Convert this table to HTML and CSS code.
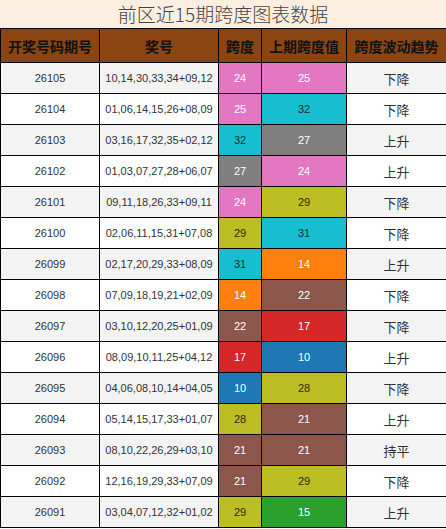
FILE: index.html
```html
<!DOCTYPE html>
<html lang="zh-CN">
<head>
    <meta charset="UTF-8">
    <title>前区近15期跨度图表数据</title>
    <link rel="stylesheet" href="styles.css">
</head>
<body>
    <div class="chart">
        <div class="title">前区近15期跨度图表数据</div>
        <table class="span-table">
            <colgroup>
                <col class="c-issue">
                <col class="c-nums">
                <col class="c-span">
                <col class="c-prev">
                <col class="c-trend">
            </colgroup>
            <thead>
                <tr>
                    <th>开奖号码期号</th>
                    <th>奖号</th>
                    <th>跨度</th>
                    <th>上期跨度值</th>
                    <th>跨度波动趋势</th>
                </tr>
            </thead>
            <tbody>
                <tr><td>26105</td><td>10,14,30,33,34+09,12</td><td class="pink">24</td><td class="pink">25</td><td>下降</td></tr>
                <tr><td>26104</td><td>01,06,14,15,26+08,09</td><td class="pink">25</td><td class="cyan">32</td><td>下降</td></tr>
                <tr><td>26103</td><td>03,16,17,32,35+02,12</td><td class="cyan">32</td><td class="grey">27</td><td>上升</td></tr>
                <tr><td>26102</td><td>01,03,07,27,28+06,07</td><td class="grey">27</td><td class="pink">24</td><td>上升</td></tr>
                <tr><td>26101</td><td>09,11,18,26,33+09,11</td><td class="pink">24</td><td class="olive">29</td><td>下降</td></tr>
                <tr><td>26100</td><td>02,06,11,15,31+07,08</td><td class="olive">29</td><td class="cyan">31</td><td>下降</td></tr>
                <tr><td>26099</td><td>02,17,20,29,33+08,09</td><td class="cyan">31</td><td class="orange">14</td><td>上升</td></tr>
                <tr><td>26098</td><td>07,09,18,19,21+02,09</td><td class="orange">14</td><td class="brown">22</td><td>下降</td></tr>
                <tr><td>26097</td><td>03,10,12,20,25+01,09</td><td class="brown">22</td><td class="red">17</td><td>下降</td></tr>
                <tr><td>26096</td><td>08,09,10,11,25+04,12</td><td class="red">17</td><td class="blue">10</td><td>上升</td></tr>
                <tr><td>26095</td><td>04,06,08,10,14+04,05</td><td class="blue">10</td><td class="olive">28</td><td>下降</td></tr>
                <tr><td>26094</td><td>05,14,15,17,33+01,07</td><td class="olive">28</td><td class="brown">21</td><td>上升</td></tr>
                <tr><td>26093</td><td>08,10,22,26,29+03,10</td><td class="brown">21</td><td class="brown">21</td><td>持平</td></tr>
                <tr><td>26092</td><td>12,16,19,29,33+07,09</td><td class="brown">21</td><td class="olive">29</td><td>下降</td></tr>
                <tr><td>26091</td><td>03,04,07,12,32+01,02</td><td class="olive">29</td><td class="green">15</td><td>上升</td></tr>
            </tbody>
        </table>
    </div>
</body>
</html>
```

FILE: styles.css
```css
* {
    margin: 0;
    padding: 0;
    box-sizing: border-box;
}

body {
    font-family: "Liberation Sans", "Noto Sans CJK SC", sans-serif;
    background: #ffffff;
    color: #333;
}

.chart {
    width: 446px;
}

.title {
    height: 28px;
    line-height: 28px;
    background: #fdefe0;
    color: #444;
    font-family: "Noto Sans CJK SC", sans-serif;
    font-size: 19px;
    font-weight: 300;
    text-align: center;
}

.span-table {
    width: 446px;
    border-collapse: collapse;
    table-layout: fixed;
}

.c-issue { width: 99px; }
.c-nums { width: 119px; }
.c-span { width: 43px; }
.c-prev { width: 85px; }
.c-trend { width: 100px; }

.span-table th,
.span-table td {
    border: 1px solid #000;
    text-align: center;
    vertical-align: middle;
    white-space: nowrap;
    overflow: hidden;
    line-height: 1;
}

.span-table th {
    height: 34px;
    background: #8b4513;
    color: #111;
    font-family: "Noto Sans CJK SC", sans-serif;
    font-size: 14px;
    font-weight: bold;
}

.span-table td {
    height: 31px;
    font-size: 11px;
}

.span-table td:last-child {
    font-family: "Noto Sans CJK SC", sans-serif;
    font-size: 13px;
}

.span-table tbody tr:nth-child(odd) {
    background: #f3f3f3;
}

.span-table tbody tr:nth-child(even) {
    background: #ffffff;
}

.pink { background: #e377c2; color: #fff; }
.cyan { background: #17becf; color: #1c2a30; }
.grey { background: #7f7f7f; color: #fff; }
.olive { background: #bcbd22; color: #2a2a10; }
.orange { background: #ff7f0e; color: #fff; }
.brown { background: #8c564b; color: #fff; }
.red { background: #d62728; color: #fff; }
.blue { background: #1f77b4; color: #fff; }
.green { background: #2ca02c; color: #fff; }
```
